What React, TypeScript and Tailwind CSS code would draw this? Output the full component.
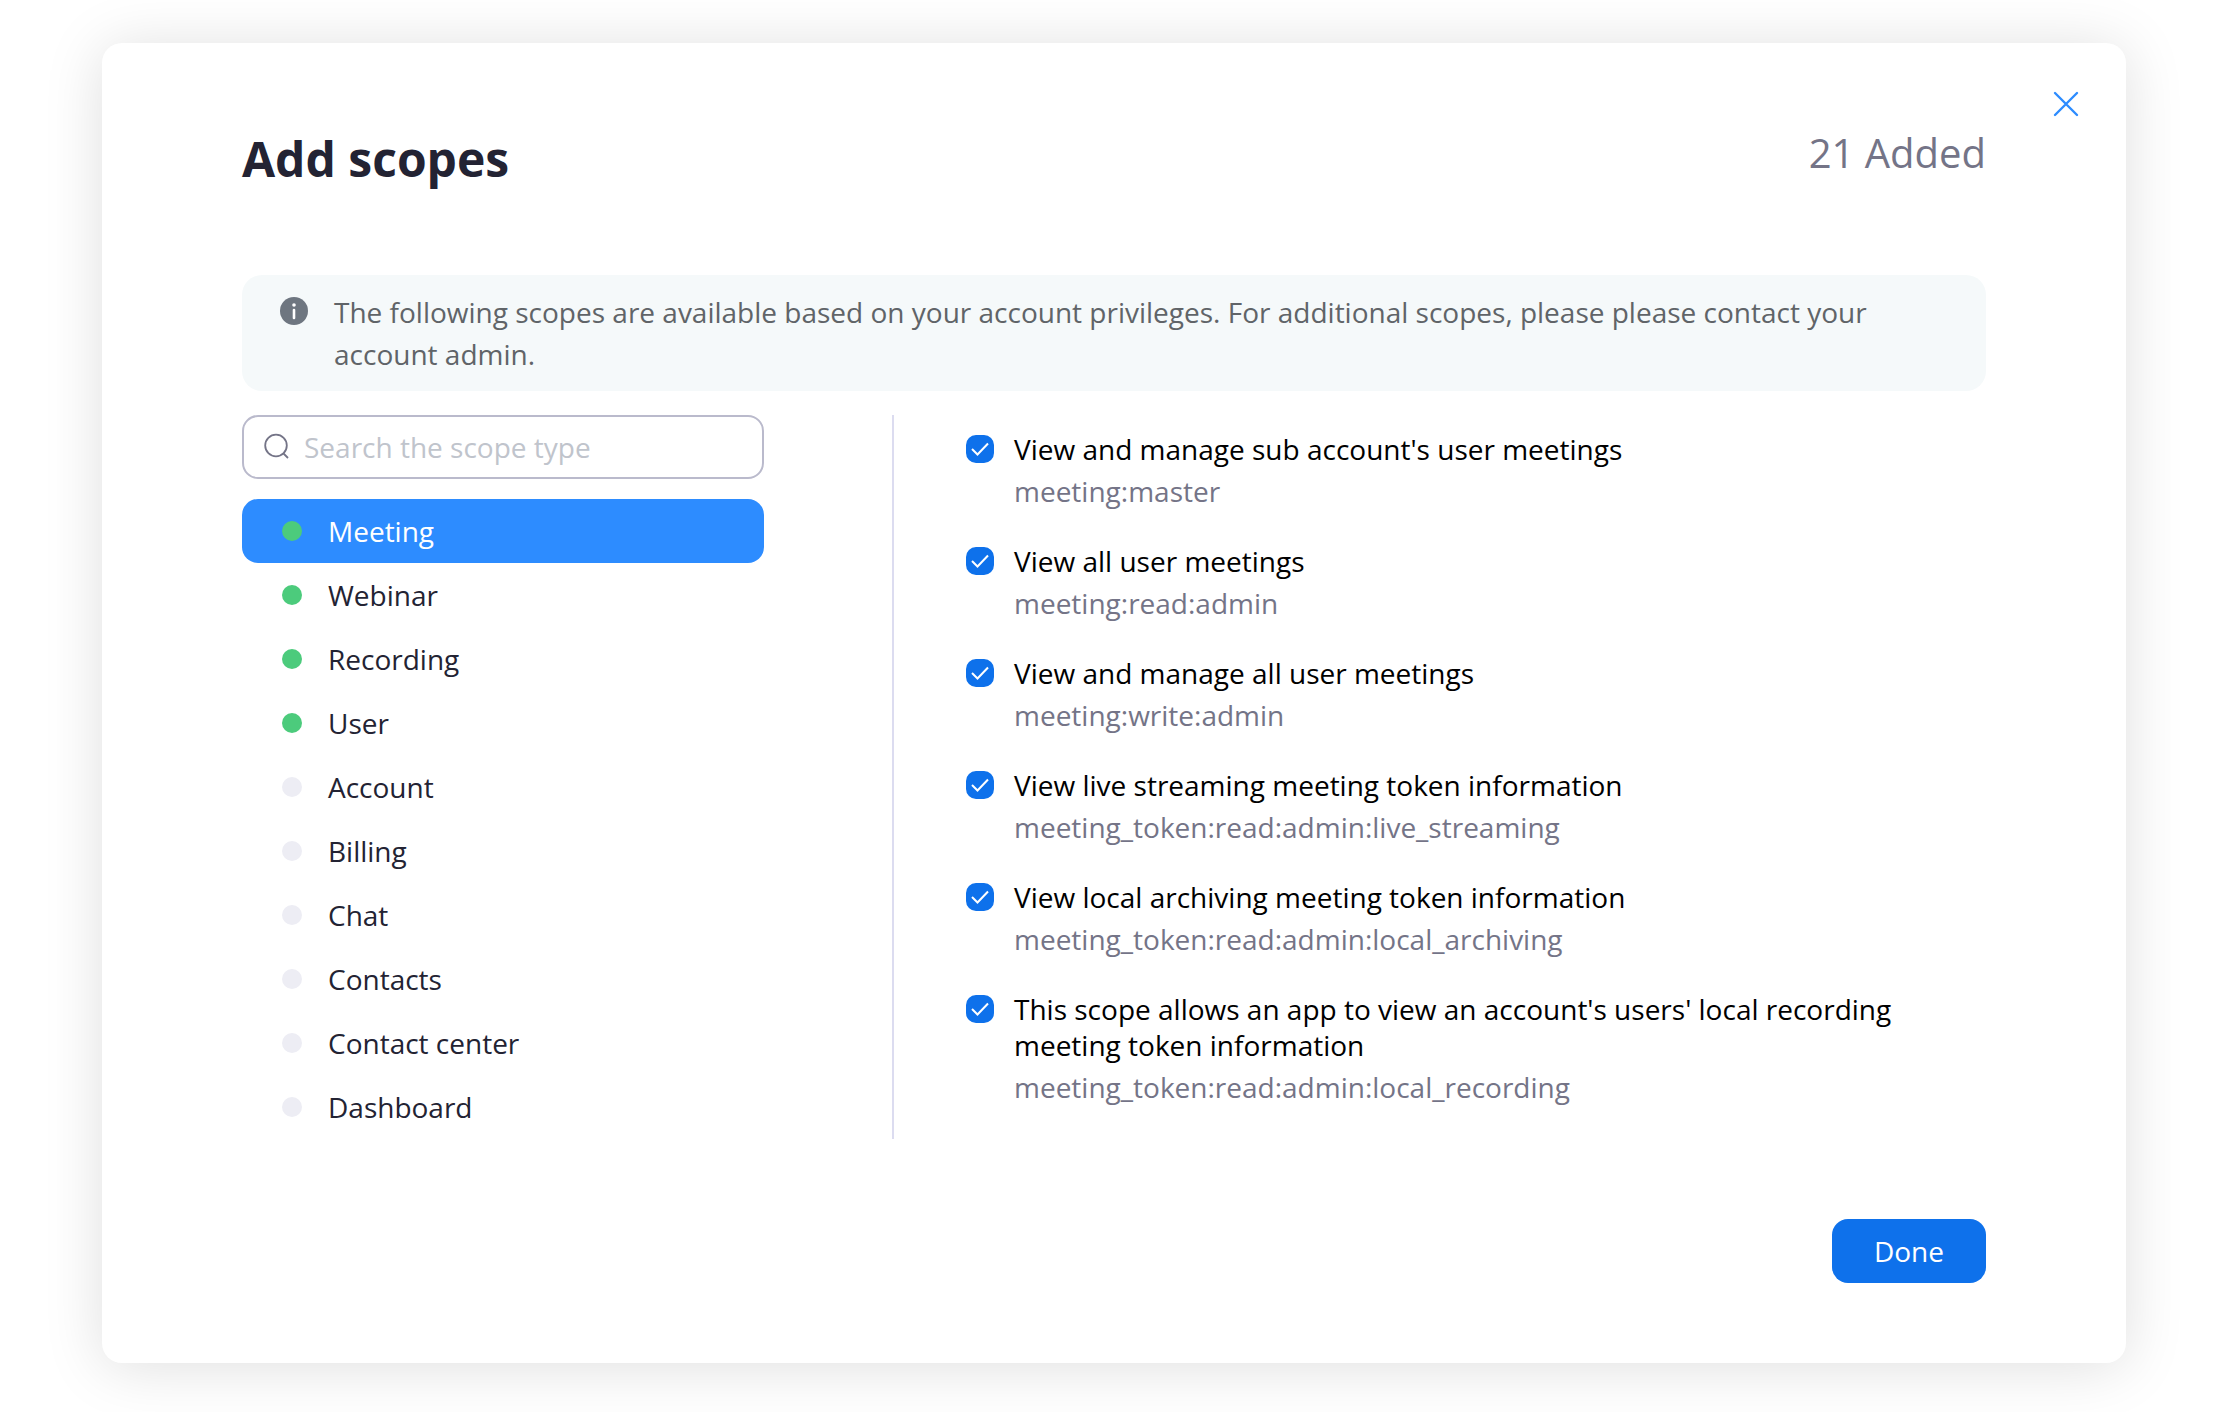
import { useState } from 'react';

const scopeTypes = [
  { name: 'Meeting', added: true },
  { name: 'Webinar', added: true },
  { name: 'Recording', added: true },
  { name: 'User', added: true },
  { name: 'Account', added: false },
  { name: 'Billing', added: false },
  { name: 'Chat', added: false },
  { name: 'Contacts', added: false },
  { name: 'Contact center', added: false },
  { name: 'Dashboard', added: false },
];

const scopes = [
  { title: "View and manage sub account's user meetings", code: 'meeting:master' },
  { title: 'View all user meetings', code: 'meeting:read:admin' },
  { title: 'View and manage all user meetings', code: 'meeting:write:admin' },
  { title: 'View live streaming meeting token information', code: 'meeting_token:read:admin:live_streaming' },
  { title: 'View local archiving meeting token information', code: 'meeting_token:read:admin:local_archiving' },
  {
    title: "This scope allows an app to view an account's users' local recording meeting token information",
    code: 'meeting_token:read:admin:local_recording',
  },
];

function Scope({ title, code }: { title: string; code: string }) {
  return (
    <label className="flex items-start gap-5">
      <span className="mt-1 grid size-7 shrink-0 place-items-center">
        <input
          type="checkbox"
          defaultChecked
          className="peer col-start-1 row-start-1 size-7 appearance-none rounded-[10px] border-2 border-[#babacc] bg-white checked:border-[#0e71eb] checked:bg-[#0e71eb]"
        />
        <svg
          viewBox="0 0 28 28"
          aria-hidden="true"
          className="pointer-events-none invisible col-start-1 row-start-1 size-7 peer-checked:visible"
        >
          <path d="M6 14 11.5 19.5 22 8.5" fill="none" stroke="#fff" strokeWidth="2" />
        </svg>
      </span>
      <span className="flex min-w-0 flex-col gap-1">
        <span className="leading-9 text-black">{title}</span>
        <span className="leading-10 text-[#747487]">{code}</span>
      </span>
    </label>
  );
}

export default function App() {
  const [selected, setSelected] = useState('Meeting');
  return (
    <div className="min-h-screen bg-white px-[102px] pt-[43px] pb-[49px] font-['Open_Sans','Noto_Sans',sans-serif] text-[28px]">
      <div
        role="dialog"
        aria-labelledby="dialog-title"
        className="relative rounded-[20px] bg-white px-[140px] pt-[84px] pb-20 shadow-[0_4px_60px_rgba(0,0,0,0.13)]"
      >
        <button type="button" aria-label="Close" className="absolute top-12 right-[47px]">
          <svg viewBox="0 0 26 26" className="size-[26px]">
            <path d="M2 2 24 24M24 2 2 24" fill="none" stroke="#2d8cff" strokeWidth="2.4" strokeLinecap="round" />
          </svg>
        </button>

        <header className="flex items-start justify-between">
          <h1 id="dialog-title" className="text-[48px] leading-[64px] font-bold text-[#232333]">
            Add scopes
          </h1>
          <p className="text-[40px] leading-[52px] text-[#747487]">21 Added</p>
        </header>

        <div role="note" className="mt-[84px] flex gap-[26px] rounded-[20px] bg-[#f5f9fa] py-4 pr-20 pl-[38px]">
          <svg viewBox="0 0 28 28" aria-hidden="true" className="mt-1.5 size-7 shrink-0">
            <circle cx="14" cy="14" r="14" fill="#6e7680" />
            <circle cx="14" cy="8" r="1.8" fill="#fff" />
            <path d="M14 13v8" stroke="#fff" strokeWidth="2.6" strokeLinecap="round" />
          </svg>
          <p className="leading-[42px] text-[#606468]">
            The following scopes are available based on your account privileges. For additional scopes, please please
            contact your account admin.
          </p>
        </div>

        <div className="mt-6 flex">
          <div className="flex w-[522px] shrink-0 flex-col gap-5">
            <label className="flex h-16 items-center gap-3 rounded-2xl border-2 border-[#babacc] px-5">
              <svg viewBox="0 0 28 28" aria-hidden="true" className="size-7 shrink-0">
                <circle cx="12" cy="12.5" r="10.8" fill="none" stroke="#747487" strokeWidth="1.8" />
                <path d="M19.5 20.5 24 25" stroke="#747487" strokeWidth="1.8" />
              </svg>
              <input
                type="text"
                aria-label="Search the scope type"
                placeholder="Search the scope type"
                className="min-w-0 flex-1 bg-transparent outline-none placeholder:text-[#c0c4cc]"
              />
            </label>
            <ul>
              {scopeTypes.map(({ name, added }) => (
                <li key={name}>
                  <button
                    type="button"
                    onClick={() => setSelected(name)}
                    className={`flex h-16 w-full items-center gap-[26px] rounded-2xl px-10 text-left ${
                      name === selected ? 'bg-[#2d8cff] text-white' : 'text-[#232333]'
                    }`}
                  >
                    <span className={`size-5 rounded-full ${added ? 'bg-[#4ccb7c]' : 'bg-[#ededf4]'}`} />
                    {name}
                  </button>
                </li>
              ))}
            </ul>
          </div>

          <div className="ml-32 flex flex-1 flex-col gap-8 border-l-2 border-[#dcdcf0] pt-4 pl-[72px]">
            {scopes.map((scope) => (
              <Scope key={scope.code} {...scope} />
            ))}
          </div>
        </div>

        <footer className="mt-20 flex justify-end">
          <button type="button" className="h-16 rounded-2xl bg-[#0e71eb] px-[42px] text-white">
            Done
          </button>
        </footer>
      </div>
    </div>
  );
}
